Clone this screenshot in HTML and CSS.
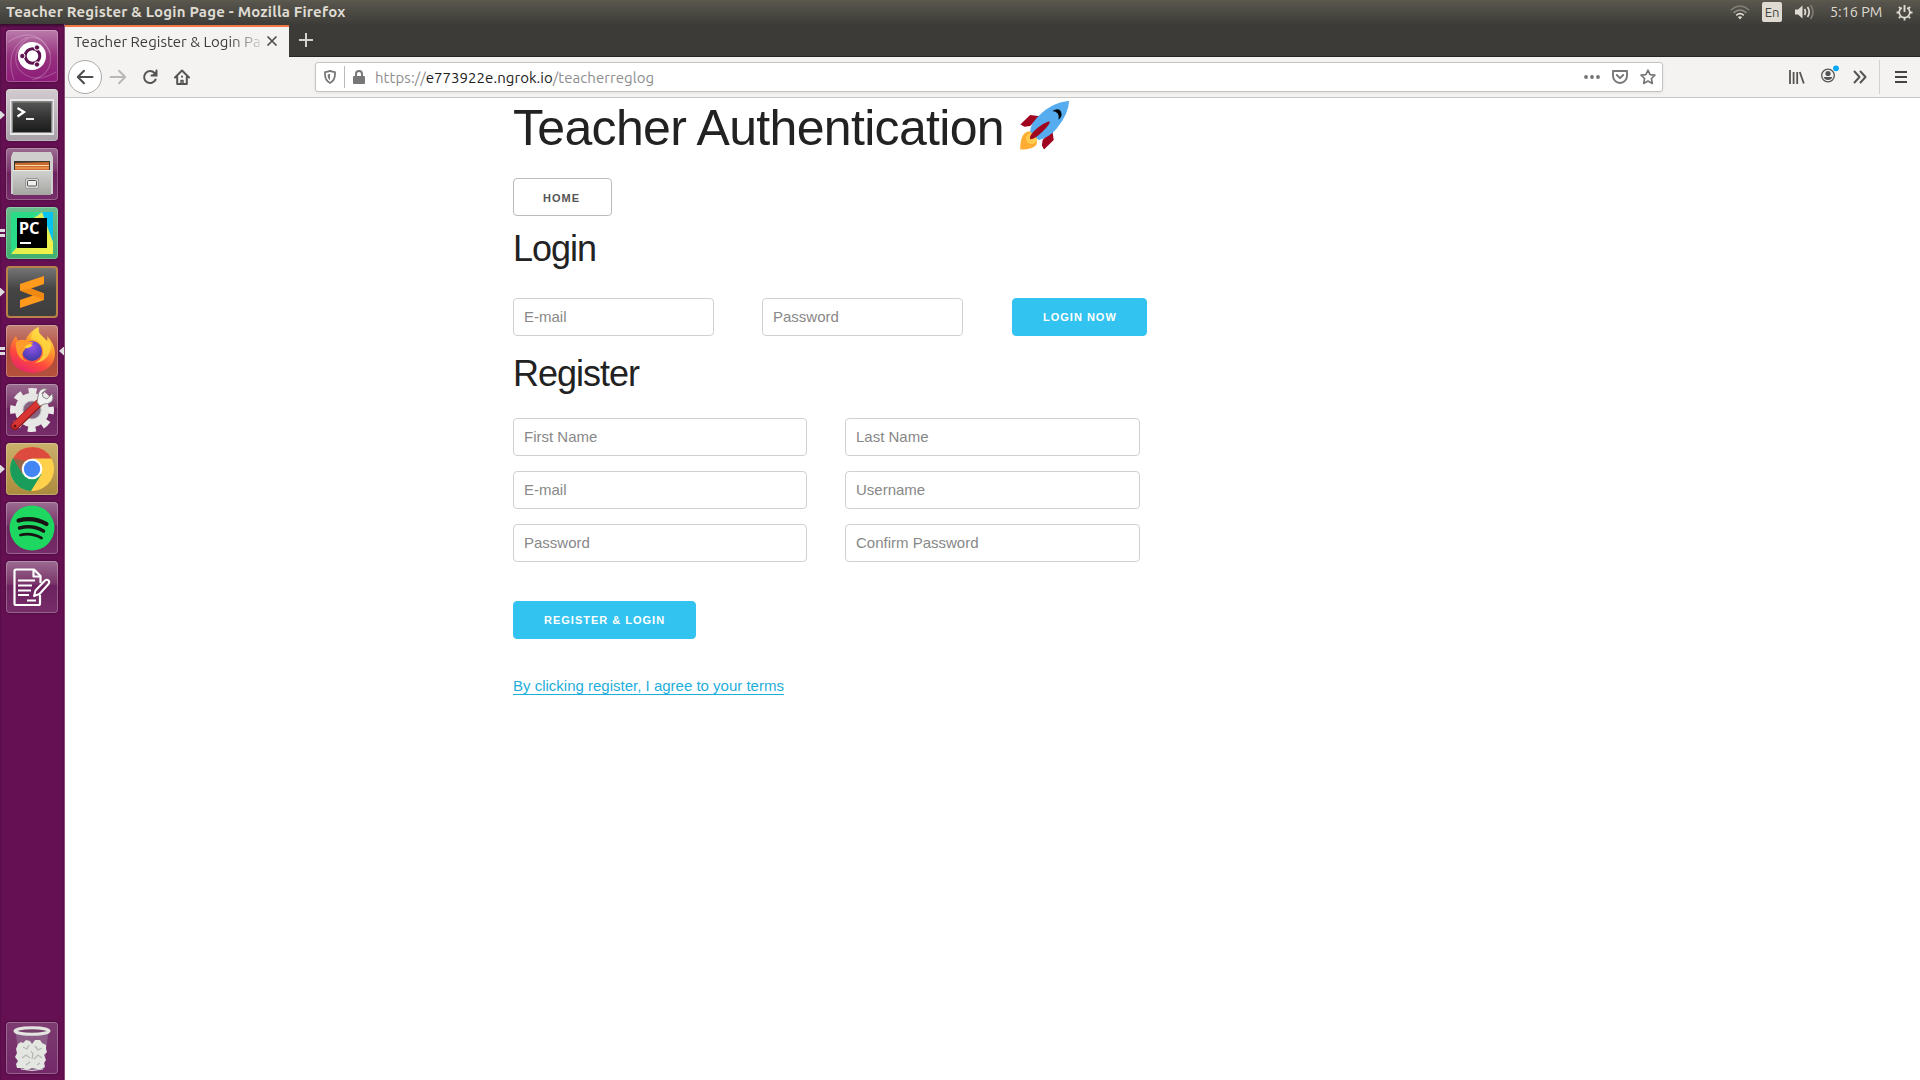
FILE: index.html
```html
<!DOCTYPE html>
<html lang="en">
<head>
<meta charset="utf-8">
<title>Teacher Register &amp; Login Page</title>
<link rel="stylesheet" href="styles.css">
</head>
<body>
<svg class="defs" width="0" height="0" aria-hidden="true">
  <defs>
    <linearGradient id="ffOuter" x1="0.8" y1="0" x2="0.3" y2="1"><stop offset="0" stop-color="#fff36b"/><stop offset=".35" stop-color="#ffa42c"/><stop offset=".7" stop-color="#ff4a3c"/><stop offset="1" stop-color="#e8246a"/></linearGradient>
    <radialGradient id="ffGlobe" cx=".5" cy=".3" r=".7"><stop offset="0" stop-color="#9553e8"/><stop offset="1" stop-color="#3f3aa8"/></radialGradient>
    <linearGradient id="metal" x1="0" y1="0" x2="0" y2="1"><stop offset="0" stop-color="#d2d2d0"/><stop offset="1" stop-color="#a5a5a2"/></linearGradient>
    <linearGradient id="screen" x1="0" y1="0" x2="0" y2="1"><stop offset="0" stop-color="#555"/><stop offset=".5" stop-color="#343434"/><stop offset="1" stop-color="#1c1c1c"/></linearGradient>
    <linearGradient id="pcGreen" x1="0" y1="0" x2="1" y2="1"><stop offset="0" stop-color="#21d789"/><stop offset=".55" stop-color="#4be07a"/><stop offset="1" stop-color="#fcf84a"/></linearGradient>
  </defs>
</svg>
<div class="desktop">
  <header class="panel">
    <span class="panel-title">Teacher Register &amp; Login Page - Mozilla Firefox</span>
    <div class="indicators">
      <svg class="i-wifi" width="20" height="15" viewBox="0 0 20 15" fill="none" stroke-width="1.6"><path d="M.8 5.2Q10-3 19.200 5.200" stroke="#7d7b73"/><path d="M3.600 7.800Q10 2.200 16.400 7.800" stroke="#918f87"/><path d="M6.200 10.300Q10 7 13.800 10.300" stroke="#dfdbd2"/><path d="M7.800 12L10 14.400 12.200 12Q10 10.400 7.800 12z" fill="#dfdbd2"/></svg>
      <span class="i-lang">En</span>
      <svg class="i-vol" width="20" height="16" viewBox="0 0 20 16"><path d="M0 5.500h3L7.500 1.500v13L3 10.500H0z" fill="#dfdbd2"/><g fill="none" stroke="#dfdbd2" stroke-width="1.700"><path d="M9.500 5q2 3 0 6M12.500 3q3.500 5 0 10"/><path d="M15.500 1q5 7 0 14" stroke="#7d7b73"/></g></svg>
      <span class="i-time">5:16 PM</span>
      <svg class="i-gear" width="17" height="17" viewBox="0 0 17 17" fill="none" stroke="#dfdbd2"><path d="M5.800 3.800a5.300 5.300 0 1 0 5.400 0" stroke-width="1.700"/><path d="M8.500 1v7" stroke-width="1.900"/><path d="M.5 8.500h2.500M14 8.500h2.500M2.900 2.900l1.500 1.500M14.100 2.900l-1.500 1.500M2.900 14.100l1.500-1.500M14.100 14.100l-1.500-1.500M8.500 14v2.500" stroke-width="1.800"/></svg>
    </div>
  </header>
  <div class="work">
    <nav class="launcher">
      <div class="tile t-dash"><svg viewBox="0 0 52 52"><g fill="none" stroke="#fff" stroke-opacity=".2" stroke-width="1.200"><path d="M2 12Q30-6 44 22Q48 44 26 50"/><path d="M8 50Q-2 20 20 8Q38 4 44 24"/><path d="M50 42Q26 56 12 38Q4 22 22 8"/></g><circle cx="26" cy="26" r="14" fill="#fff"/><circle cx="26.500" cy="26" r="7.300" fill="none" stroke="#5e1350" stroke-width="3"/><g fill="#5e1350" stroke="#fff" stroke-width="1"><circle cx="16.300" cy="26" r="2.700"/><circle cx="31" cy="17.500" r="2.700"/><circle cx="31" cy="34.500" r="2.700"/></g></svg></div>
      <div class="tile t-term"><i class="pip one"></i><svg viewBox="0 0 52 52"><path d="M4 10h44v36H4z" fill="#e9e9e8"/><path d="M5.500 12h41v32h-41z" fill="#858585"/><path d="M7 13.500h38V43H7z" fill="url(#screen)"/><path d="M11.500 19l6.500 4-6.500 4.500" fill="none" stroke="#fff" stroke-width="2.300"/><path d="M20 30h8" stroke="#fff" stroke-width="1.800"/></svg></div>
      <div class="tile t-files"><svg viewBox="0 0 52 52"><path d="M7 4h38l2 5v37H5V9z" fill="#cfcfce"/><path d="M8 13h36v11H8z" fill="#3a3530"/><path d="M9 15l34-1V24H9z" fill="#c96a2e"/><path d="M9 17.500h34" stroke="#ffd9a8" stroke-width="1.200"/><path d="M9 20h34" stroke="#f29a52" stroke-width="1.500"/><path d="M7 22h38v25H7z" fill="url(#metal)"/><path d="M7 22.500h38" stroke="#eee"/><rect x="19.500" y="30.500" width="13" height="10" rx="1.500" fill="#d7d7d5" stroke="#999"/><rect x="21.500" y="32.500" width="9" height="5.500" rx="1" fill="#eee" stroke="#555"/></svg></div>
      <div class="tile t-pc"><i class="pip two"></i><svg viewBox="0 0 52 52"><path d="M5 5h42v42H5z" fill="url(#pcGreen)"/><path d="M36 5h11v30L30 8z" fill="#07c3f2"/><path d="M28 11l8-6 11 30v12H5z" fill="#f3f249" opacity=".9"/><path d="M5 5h25L11 40l-6 7z" fill="#2adb88"/><path d="M11 11h30v30H11z" fill="#000"/><text x="12.700" y="27" class="pc-text">PC</text><path d="M14 36h11" stroke="#fff" stroke-width="2"/></svg></div>
      <div class="tile t-subl"><i class="pip one"></i><svg viewBox="0 0 52 52"><path d="M14 18L38 10v8l-13 4.500 13 5V34L14 42v-8l13-4.500-13-5z" fill="#ff9a1c"/><path d="M25 22.500l13 5V34L14 24.500z" fill="#f08912"/></svg></div>
      <div class="tile t-ff"><i class="pip two"></i><i class="pip active"></i><svg viewBox="0 0 52 52"><path d="M33 2q-2 5 3 9l5 5q1-3 0-5 8 8 8 18-1 17-22 19Q4 46 4 26q0-8 6-15l2 5q4-2 7 0Q24 5 33 2z" fill="url(#ffOuter)"/><path d="M33 2q-8 4-8 12 9 1 12 9 2 10-8 15 16-2 16-20l-4-2-5-5q-5-4-3-9z" fill="#ffd83f" opacity=".85"/><circle cx="26" cy="26" r="10" fill="url(#ffGlobe)"/><path d="M10 17q5-4 11-1 4 1 6 1-1 4-6 5-2 2-4 5-3 7 6 10Q9 35 10 17z" fill="#ff9a2c"/><path d="M18 22q4 3 9-2l-4-1z" fill="#ffd43d"/></svg></div>
      <div class="tile t-set"><svg viewBox="0 0 52 52"><circle cx="26" cy="26" r="19" fill="none" stroke="#e9e9e8" stroke-width="6" stroke-dasharray="8 6.923" stroke-dashoffset="4"/><circle cx="26" cy="26" r="13" fill="none" stroke="#e6e6e5" stroke-width="8"/><circle cx="26" cy="26" r="9" fill="#876382" stroke="#bbb"/><path d="M9 42L33 19" stroke="#971a1a" stroke-width="8" stroke-linecap="round"/><path d="M9 41.500L32 19.500" stroke="#d93434" stroke-width="6" stroke-linecap="round"/><path d="M31 18l3 4 4-2q8 0 9-6l-1-4-5 5-4-2-1-4 5-4q-8-2-9 7z" fill="#f1f1f1" stroke="#8d8d8d"/><circle cx="9" cy="42" r="1.500" fill="#611"/></svg></div>
      <div class="tile t-chrome"><i class="pip one"></i><svg viewBox="0 0 52 52"><circle cx="26" cy="26" r="22" fill="#ffd04a"/><path d="M26 26L35.500 31 25 48A22 22 0 0 1 7 15z" fill="#1a9d5b"/><path d="M7 15A22 22 0 0 1 45.500 15.500L26 15.500 16.500 31z" fill="#dc4b3e"/><path d="M7 15L16.500 31 20 18z" fill="#1a9d5b" opacity=".35"/><circle cx="26" cy="26" r="10.300" fill="#fff"/><circle cx="26" cy="26" r="8.200" fill="#4285f4"/></svg></div>
      <div class="tile t-spot"><svg viewBox="0 0 52 52"><circle cx="26" cy="26" r="22.500" fill="#1ed760"/><g fill="none" stroke="#191414" stroke-linecap="round"><path d="M12.500 18.500q15-4 28 3.500" stroke-width="4.200"/><path d="M13.500 26q13-3.500 24 3" stroke-width="3.500"/><path d="M14.500 33q11-2.500 21 3" stroke-width="2.800"/></g></svg></div>
      <div class="tile t-note"><svg viewBox="0 0 52 52" fill="none" stroke="#fff" stroke-width="2.200" stroke-linejoin="round"><path d="M34 34v8.500q0 1.500-1.500 1.500H10q-1.500 0-1.500-1.500V10q0-1.500 1.500-1.500h18l6.500 6.500v7"/><path d="M27.500 8.500v7h7"/><path d="M12 19.500h17M12 24.500h14M12 29.500h13M12 34h11M21 39.500h9"/><path d="M28 35l1.500-5.500L39 19.500q2-1.500 3.500 0t0 3.500L33.500 33z" stroke-width="2"/></svg></div>
      <div class="tile t-trash"><svg viewBox="0 0 52 52"><path d="M10 12l4 35q12 4 24 0l4-35z" fill="#9b7d9a" opacity=".55"/><path d="M12 22l3-2 2 1 3-3 4 1 2 3 3-4 5 0 2 3 4 2 0 4 1 3-3 3 2 5-2 3 1 4-4 2-4 0-5-1-5 2-4-2-6 0-1-4 2-3-3-4 2-4-1-4z" fill="#e4e6e2"/><path d="M17 25l4 2 2-4M29 24l3 4 4-2M16 36l4-3 4 3M28 37l4-4 4 3M25 29l2 3-1 5M20 43l4-3M31 43l3-2" stroke="#b5b8b3" stroke-width="1.300" fill="none"/><path d="M15 47q11 3 22 0" stroke="#d8d8d8" fill="none"/><ellipse cx="26" cy="9" rx="17" ry="3.300" fill="#74406a" stroke="#e3e3e0" stroke-width="3"/></svg></div>
    </nav>
    <main class="browser">
      <div class="tabs">
        <div class="tab"><span class="tab-title">Teacher Register &amp; Login Page</span><svg width="12" height="12" viewBox="0 0 12 12" stroke="#4d4d4d" stroke-width="1.700"><path d="M1.500 1.500l9 9M10.500 1.500l-9 9"/></svg></div>
        <svg class="newtab" width="14" height="14" viewBox="0 0 14 14" stroke="#d5d3ce" stroke-width="2"><path d="M7 0v14M0 7h14"/></svg>
      </div>
      <div class="toolbar">
        <div class="back"><svg width="18" height="16" viewBox="0 0 18 16" fill="none" stroke="#4d4d4d" stroke-width="2" stroke-linecap="round" stroke-linejoin="round"><path d="M16.500 8H2M8 1.800L1.800 8 8 14.200"/></svg></div>
        <svg class="fwd" width="18" height="16" viewBox="0 0 18 16" fill="none" stroke="#b9b8b6" stroke-width="2" stroke-linecap="round" stroke-linejoin="round"><path d="M1.500 8H16M10 1.800L16.200 8 10 14.200"/></svg>
        <svg class="reload" width="16" height="16" viewBox="0 0 16 16" fill="none" stroke="#555" stroke-width="2" stroke-linecap="round"><path d="M13.600 10.500A6 6 0 1 1 12.500 4"/><path d="M14.800 1.500v5.500H9.200z" fill="#555" stroke="none"/><path d="M14.500 1.500v5H9.500"/></svg>
        <svg class="home" width="16" height="16" viewBox="0 0 16 16" fill="none" stroke="#555" stroke-width="2" stroke-linecap="round" stroke-linejoin="round"><path d="M1 8.500L8 1.500l7 7M3.200 8v7h9.600V8"/><path d="M7 15v-3.500h2V15" stroke-width="1.500"/><path d="M8 7.500v.3"/></svg>
        <div class="urlbar">
          <svg class="shield" width="12" height="14" viewBox="0 0 12 14" fill="none" stroke="#777" stroke-width="1.800" stroke-linejoin="round"><path d="M1 2.200Q4 1.800 6 .9q2 .9 5 1.300Q11.500 10.500 6 13 .5 10.500 1 2.200z"/><path d="M6 3.800v6.500Q3.500 8.500 3.700 4.400z" fill="#777" stroke="none"/></svg>
          <i class="sep"></i>
          <svg class="lock" width="12" height="14" viewBox="0 0 12 14"><path d="M3 7V4a3 3 0 0 1 6 0v3" fill="none" stroke="#777" stroke-width="2"/><rect y="6" width="12" height="8" rx="1" fill="#777"/></svg>
          <span class="url">https://<b>e773922e.ngrok.io</b>/teacherreglog</span>
          <svg class="dots" width="16" height="4" viewBox="0 0 16 4" fill="#737373"><circle cx="2" cy="2" r="1.900"/><circle cx="8" cy="2" r="1.900"/><circle cx="14" cy="2" r="1.900"/></svg>
          <svg class="pocket" width="16" height="14" viewBox="0 0 16 14" fill="none" stroke="#777" stroke-width="1.900" stroke-linecap="round" stroke-linejoin="round"><path d="M1 1h14v5a7 7 0 0 1-14 0z"/><path d="M4.800 5L8 8.200 11.200 5"/></svg>
          <svg class="star" width="16" height="16" viewBox="0 0 16 16" fill="none" stroke="#777" stroke-width="1.700" stroke-linejoin="round"><path d="M8 1.200l2.100 4.400 4.800.6-3.500 3.300.9 4.900L8 12l-4.300 2.400.9-4.900L1.100 6.200l4.800-.6z"/></svg>
        </div>
        <svg class="lib" width="16" height="14" viewBox="0 0 16 14" stroke="#555" stroke-width="1.800"><path d="M1 0v14M4.600 2v12M8.200 2v12M10.800 2l4 11.500"/></svg>
        <svg class="acct" width="18" height="18" viewBox="0 0 18 18"><circle cx="7" cy="10.500" r="6.300" fill="none" stroke="#555" stroke-width="1.300"/><circle cx="7" cy="8.500" r="2.600" fill="#555"/><path d="M2.700 12h8.600Q10.500 15 7 15T2.700 12z" fill="#555"/><circle cx="15" cy="3.300" r="2.900" fill="#00a9f4"/></svg>
        <svg class="more" width="14" height="14" viewBox="0 0 14 14" fill="none" stroke="#555" stroke-width="2" stroke-linecap="round" stroke-linejoin="round"><path d="M1.500 1.500L6.500 7l-5 5.500M7.500 1.500l5 5.500-5 5.500"/></svg>
        <i class="tsep"></i>
        <svg class="menu" width="12" height="12" viewBox="0 0 12 12" stroke="#444" stroke-width="2"><path d="M0 1h12M0 6h12M0 11h12"/></svg>
      </div>
      <div class="page">
        <h1><span>Teacher Authentication</span><svg class="rocket" width="50" height="50" viewBox="0 0 36 36"><path d="M1 17l7-7 7 1-7 7-4 .5zM18 35l7-7-1-7-7 7-.500 4z" fill="#a0041e"/><path d="M.9 35S.3 24.500 5.500 22.300 15 29 12 32 .9 35 .9 35z" fill="#ffac33"/><circle cx="9" cy="27" r="4" fill="#ffcc4d"/><path d="M36 0s-10 0-20 9Q8 16 8 22l6 6q7-1 13-8Q36 9 36 0z" fill="#55acee"/><path d="M8 27.500Q7 25 12 20.500t10-6Q23 16 17 22t-9 5.500z" fill="#a0041e"/><path d="M24 7.200q5-2.800 6.400 1Q31.500 11 28.500 13.500 29.500 7.500 24 7.200z" fill="#000"/></svg></h1>
        <a class="button home-btn">Home</a>
        <h2>Login</h2>
        <form class="login">
          <input placeholder="E-mail"><input placeholder="Password"><button type="button" class="button primary login-btn">Login now</button>
        </form>
        <h2 class="reg-title">Register</h2>
        <form class="register">
          <input placeholder="First Name"><input placeholder="Last Name">
          <input placeholder="E-mail"><input placeholder="Username">
          <input placeholder="Password"><input placeholder="Confirm Password">
        </form>
        <button type="button" class="button primary reg-btn">Register &amp; Login</button>
        <a class="terms">By clicking register, I agree to your terms</a>
      </div>
    </main>
  </div>
</div>
</body>
</html>
```
FILE: styles.css
```css
* { box-sizing: border-box; }
body { margin: 0; overflow: hidden; font-family: "Ubuntu", "Noto Sans", sans-serif; }
svg { display: block; flex: none; }
.defs { position: absolute; }
.desktop { display: flex; flex-direction: column; width: 1920px; height: 1080px; }

.panel { flex: none; display: flex; justify-content: space-between; height: 24px; padding: 0 7px 0 6px; color: #dfdbd2; background: linear-gradient(#5d5a4f 0, #57554c 2px, #3e3d39 100%); }
.panel-title { font-size: 15px; font-weight: 700; line-height: 24px; letter-spacing: .19px; white-space: nowrap; }
.indicators { display: flex; align-items: center; }
.i-lang { width: 20px; height: 20px; margin: 0 13px 0 12px; border-radius: 2px; background: #dfdbd2; color: #45443f; font-size: 13px; line-height: 21px; text-align: center; }
.i-time { width: 53px; margin: 0 13px 0 15px; font-size: 14.4px; line-height: 23px; white-space: nowrap; }

.work { flex: 1; display: flex; min-height: 0; }
.launcher { flex: none; display: flex; flex-direction: column; gap: 7px; width: 65px; padding: 6px 0 6px 6px; background: #651052; border-right: 1px solid #885078; box-shadow: inset 0 2px 2px #3a0c31; }
.tile { position: relative; flex: none; width: 52px; height: 52px; border-radius: 4px; box-shadow: inset 0 0 0 1px rgba(255,255,255,.25), 0 0 3px rgba(0,0,0,.4); background: linear-gradient(#9b6c91, #793368 45%, #6d2160 46%, #762d69); }
.tile:last-child { margin-top: auto; background: linear-gradient(#7d3b70, #74296a); }
.tile > svg { width: 52px; height: 52px; }
.t-dash { background: linear-gradient(#ba7cab, #97317f 50%, #8c1b78); }
.t-term { background: linear-gradient(#d2cbd0, #a89fa8); }
.t-pc { background: linear-gradient(#6bbd8d, #3fb06e); }
.t-subl { background: linear-gradient(#787878, #444 45%, #3e3e3e); box-shadow: inset 0 0 0 2px #b98347; }
.t-ff { background: linear-gradient(#c58276, #b04a3d 50%, #b5503c); }
.t-chrome { background: linear-gradient(#cbb06c, #ac8a3c); }
.pc-text { font: 700 16.500px "Open Sans", sans-serif; fill: #fff; }
.pip { position: absolute; left: -6px; top: 21.500px; width: 5px; height: 9px; background: #ddd; clip-path: polygon(0 0, 100% 50%, 0 100%); }
.pip.two { background: linear-gradient(#ddd 0 3px, transparent 3px 5px, #ddd 5px 8px, transparent 8px); clip-path: none; }
.pip.active { left: 53px; background: #ddd; clip-path: polygon(0 50%, 100% 0, 100% 100%); }

.browser { flex: 1; display: flex; flex-direction: column; min-width: 0; background: #fff; }
.tabs { flex: none; display: flex; align-items: center; height: 33px; background: #3c3b37; border-bottom: 1px solid #272622; }
.tab { display: flex; align-items: center; gap: 6px; width: 224px; height: 32px; margin-top: 1px; padding: 0 0 2px 9px; background: #f4f3f1; border-top: 2px solid #f07746; color: #3d3d3d; align-self: flex-start; }
.tab-title { width: 186px; overflow: hidden; font-size: 15px; white-space: nowrap; -webkit-mask-image: linear-gradient(90deg, #000 155px, transparent 192px); mask-image: linear-gradient(90deg, #000 155px, transparent 192px); }
.newtab { margin-left: 10px; }
.toolbar { flex: none; display: flex; align-items: center; height: 41px; padding: 0 13px 0 3px; background: #f4f3f1; border-bottom: 1px solid #c8c7c4; }
.back { flex: none; display: flex; align-items: center; justify-content: center; width: 34px; height: 34px; border: 1px solid #aaa9a7; border-radius: 50%; background: #fff; }
.fwd { margin-left: 7px; }
.reload { margin-left: 15px; }
.home { margin-left: 16px; }
.urlbar { flex: none; display: flex; align-items: center; width: 1348px; height: 30px; margin-left: 125px; padding: 0 6px 0 8px; border: 1px solid #c5c4c1; border-radius: 3px; background: #fff; box-shadow: 0 1px 3px rgba(0,0,0,.08); }
.sep { width: 1px; height: 22px; margin: 0 8px 0 8px; background: #bbb; }
.url { flex: 1; margin-left: 10px; color: #8e8e8e; font-size: 15px; letter-spacing: .05px; white-space: nowrap; }
.url b { color: #222; font-weight: 400; }
.pocket { margin: 0 12px; }
.lib { margin-left: 126px; }
.acct { margin: -6px 14px 0 16px; }
.tsep { flex: none; width: 1px; height: 34px; margin: 0 15px 0 12px; background: #d2d1ce; }

.page { flex: 1; display: flex; flex-direction: column; align-items: flex-start; padding: 0 0 0 448px; color: #222; font-family: "Liberation Sans", Arial, sans-serif; font-size: 15px; }
h1 { display: flex; gap: 15px; height: 60px; margin: 0 0 20px; font-size: 50px; font-weight: 400; line-height: 60px; letter-spacing: -.68px; white-space: nowrap; }
.rocket { margin-top: 3px; }
h2 { height: 45px; margin: 10px 0 27px; font-size: 36px; font-weight: 400; line-height: 45px; letter-spacing: -1px; }
.button { height: 38px; padding: 0 30px; border: 1px solid #bbb; border-radius: 4px; color: #555; background: #fff; font: 600 11px/38px "Liberation Sans", Arial, sans-serif; letter-spacing: 1px; text-transform: uppercase; white-space: nowrap; }
.home-btn { width: 99px; padding: 0 0 0 29px; }
.primary { color: #fff; background: #33c3f0; border-color: #33c3f0; line-height: 36px; }
input { height: 38px; padding: 5px 10px 7px; border: 1px solid #d1d1d1; border-radius: 4px; background: #fff; font: 15px "Liberation Sans", Arial, sans-serif; }
input::placeholder { color: #888; opacity: 1; }
.login { display: flex; gap: 48px; }
.login input { width: 201px; }
.login-btn { width: 135px; margin-left: 1px; }
.reg-title { margin: 15px 0 22px; }
.register { display: grid; grid-template-columns: 294px 295px; gap: 15px 38px; }
.reg-btn { margin-top: 39px; }
.terms { margin-top: 35px; color: #1eaedb; line-height: 24px; text-decoration: underline; text-underline-offset: 2.5px; }
```
